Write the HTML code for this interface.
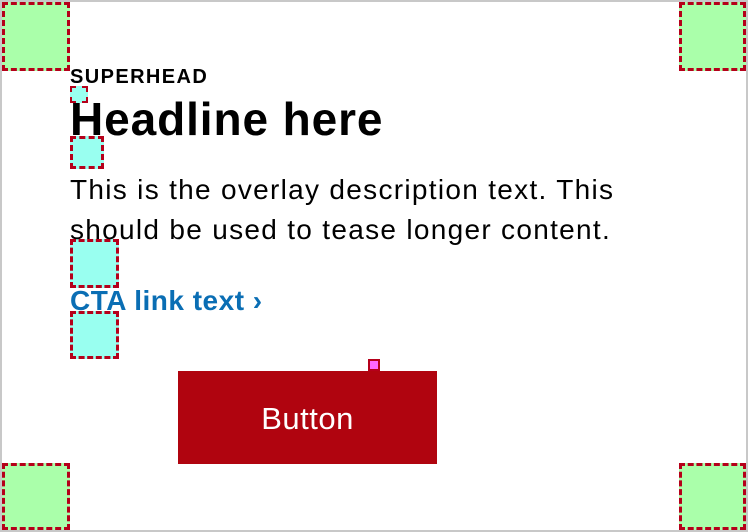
<!DOCTYPE html>
<html><head><meta charset="utf-8"><style>
html,body{margin:0;padding:0}
body{width:748px;height:532px;position:relative;overflow:hidden;background:#fff;font-family:"Liberation Sans",sans-serif}
.frame{position:absolute;left:0;top:0;width:744px;height:528px;border:2px solid #c8c8c8}
.b{position:absolute;box-sizing:border-box;border:3px dashed #b5001a}
.g{background:#aaffaa}
.c{background:#99fff0}
.t{position:absolute;left:70px;white-space:nowrap;color:#000}
</style></head><body>
<div class="frame"></div>
<div class="b g" style="left:2px;top:2px;width:68px;height:69px"></div>
<div class="b g" style="left:679px;top:2px;width:67px;height:69px"></div>
<div class="b g" style="left:2px;top:463px;width:68px;height:67px"></div>
<div class="b g" style="left:679px;top:463px;width:67px;height:67px"></div>
<div class="b c" style="left:70px;top:86px;width:18px;height:17px;border-width:2px"></div>
<div class="b c" style="left:70px;top:136px;width:34px;height:33px"></div>
<div class="b c" style="left:70px;top:239px;width:49px;height:49px"></div>
<div class="b c" style="left:70px;top:311px;width:49px;height:48px"></div>
<div class="b" style="left:368px;top:359px;width:12px;height:12px;background:#ff66ff;border-width:2px"></div>
<div class="t" style="top:66px;font-size:20px;font-weight:bold;line-height:22px;letter-spacing:1.4px">SUPERHEAD</div>
<div class="t" style="top:93px;font-size:46px;font-weight:bold;line-height:52px;letter-spacing:0.9px">Headline here</div>
<div class="t" style="top:170px;font-size:28px;line-height:40px;letter-spacing:1.3px">This is the overlay description text. This<br>should be used to tease longer content.</div>
<div class="t" style="top:283px;font-size:28px;font-weight:bold;line-height:36px;color:#0a6eb4;letter-spacing:0.5px">CTA link text ›</div>
<div style="position:absolute;left:178px;top:371px;width:259px;height:93px;background:#b0040f;color:#fff;font-size:31px;line-height:95px;text-align:center;letter-spacing:0.5px">Button</div>
</body></html>
